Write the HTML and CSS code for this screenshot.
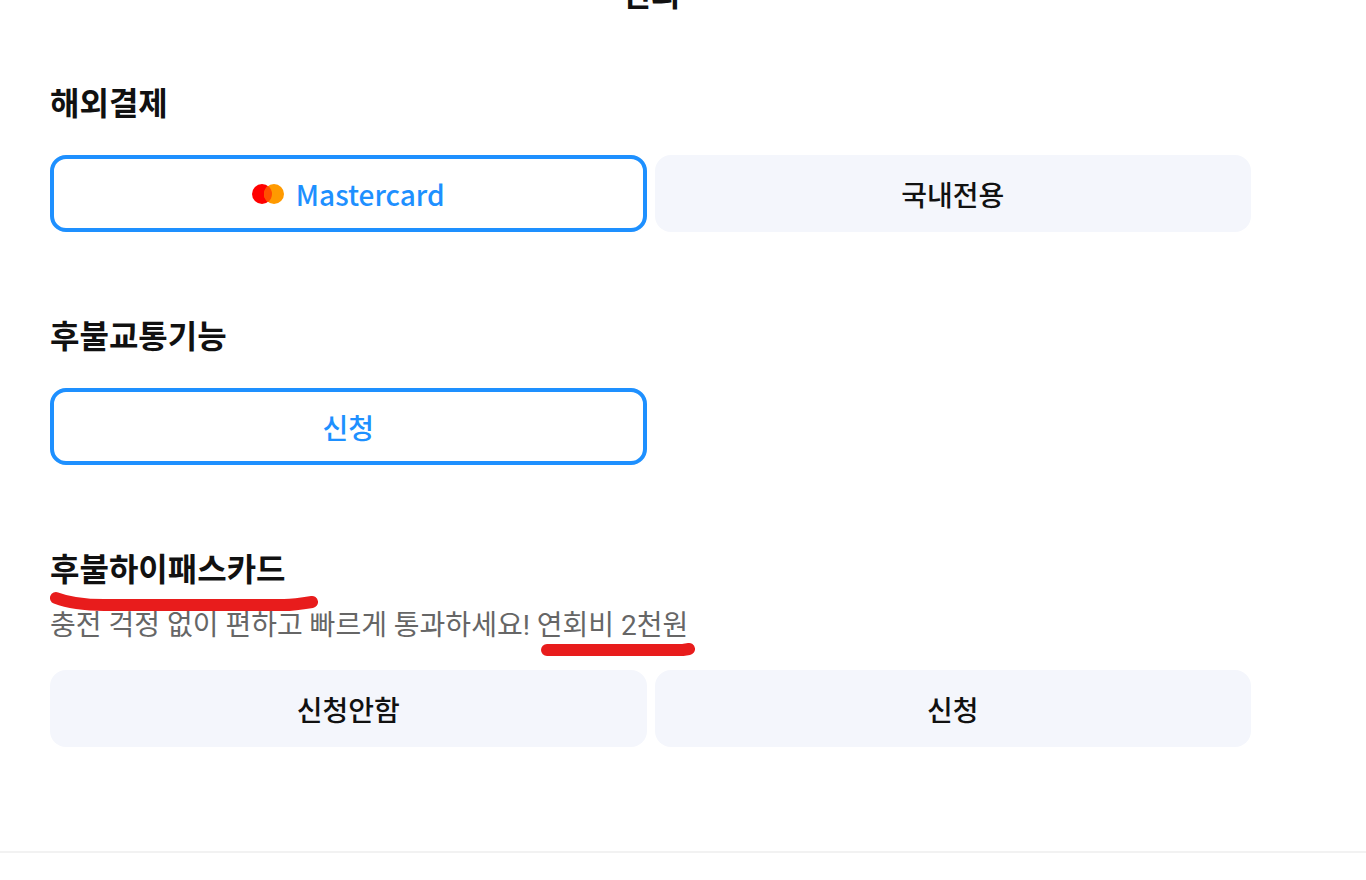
FILE: index.html
```html
<!DOCTYPE html>
<html lang="ko">
  <head>
    <meta charset="UTF-8" />
    <meta name="viewport" content="width=device-width, initial-scale=1.0" />
    <title>카드 신청</title>
    <link rel="stylesheet" href="styles.css" />
  </head>
  <body>
    <header class="page-title">
      <h1>편의</h1>
    </header>

    <form class="card-form">
      <section class="group">
        <h2>해외결제</h2>
        <div class="options">
          <button type="button" class="option selected">
            <svg class="brand" viewBox="0 0 32 20" aria-hidden="true">
              <circle cx="10" cy="10" r="10" fill="#ff0000" />
              <circle cx="22" cy="10" r="10" fill="#ff9a00" />
              <path d="M16 2a10 10 0 0 1 0 16a10 10 0 0 1 0-16z" fill="#ff5000" />
            </svg>
            Mastercard
          </button>
          <button type="button" class="option">국내전용</button>
        </div>
      </section>

      <section class="group">
        <h2>후불교통기능</h2>
        <div class="options">
          <button type="button" class="option selected">신청</button>
        </div>
      </section>

      <section class="group">
        <h2 class="marked">
          후불하이패스카드
          <svg class="stroke stroke-title" viewBox="0 0 268 20" aria-hidden="true">
            <path d="M6 7Q24 14 54 14H234Q244 14 262 11" />
          </svg>
        </h2>
        <p class="desc">
          충전 걱정 없이 편하고 빠르게 통과하세요!
          <span class="marked">연회비 2천원<svg class="stroke stroke-fee" viewBox="0 0 154 14" aria-hidden="true">
              <path d="M6 8H142L148 7" />
            </svg></span>
        </p>
        <div class="options">
          <button type="button" class="option">신청안함</button>
          <button type="button" class="option">신청</button>
        </div>
      </section>
    </form>
    <hr class="divider" />
  </body>
</html>
```

FILE: styles.css
```css
* {
  box-sizing: border-box;
}

body {
  margin: 0;
  background-color: #fff;
  color: #111;
  font-family: 'Noto Sans CJK KR', sans-serif;
  overflow: hidden;
}

h1,
h2,
p {
  margin: 0;
}

/* the title is scrolled almost out of view */
.page-title {
  margin-top: -32px;
  padding-right: 64px;
  text-align: center;
}

h1,
h2 {
  font-size: 32px;
  font-weight: 700;
  line-height: 48px;
}

.card-form {
  padding: 61px 115px 104px 50px;
}

.group + .group {
  margin-top: 78px;
}

.options {
  display: grid;
  grid-template-columns: 1fr 1fr;
  gap: 8px;
  margin-top: 30px;
}

.option {
  display: flex;
  align-items: center;
  justify-content: center;
  gap: 12px;
  height: 77px;
  padding: 0;
  border: 0;
  border-radius: 16px;
  background-color: #f4f6fc;
  color: #111;
  font-family: inherit;
  font-size: 28px;
  font-weight: 500;
  line-height: 40px;
}

.option.selected {
  border: 4px solid #1e90ff;
  background-color: #fff;
  color: #1e90ff;
}

.brand {
  width: 32px;
  height: 20px;
}

.desc {
  margin-top: 15px;
  color: #666;
  font-family: Roboto, 'Noto Sans CJK KR', sans-serif;
  font-size: 28px;
  line-height: 40px;
}

.desc + .options {
  margin-top: 24px;
}

.marked {
  position: relative;
}

/* red marker lines drawn over the text */
.stroke {
  position: absolute;
  left: 0;
  fill: none;
  stroke: #e81c1c;
  stroke-width: 12;
  stroke-linecap: round;
}

.stroke-title {
  top: 100%;
  width: 268px;
  height: 20px;
}

.stroke-fee {
  top: 100%;
  left: 4px;
  width: 154px;
  height: 14px;
}

.divider {
  height: 2px;
  margin: 0;
  border: 0;
  background-color: #f2f2f2;
}
```
